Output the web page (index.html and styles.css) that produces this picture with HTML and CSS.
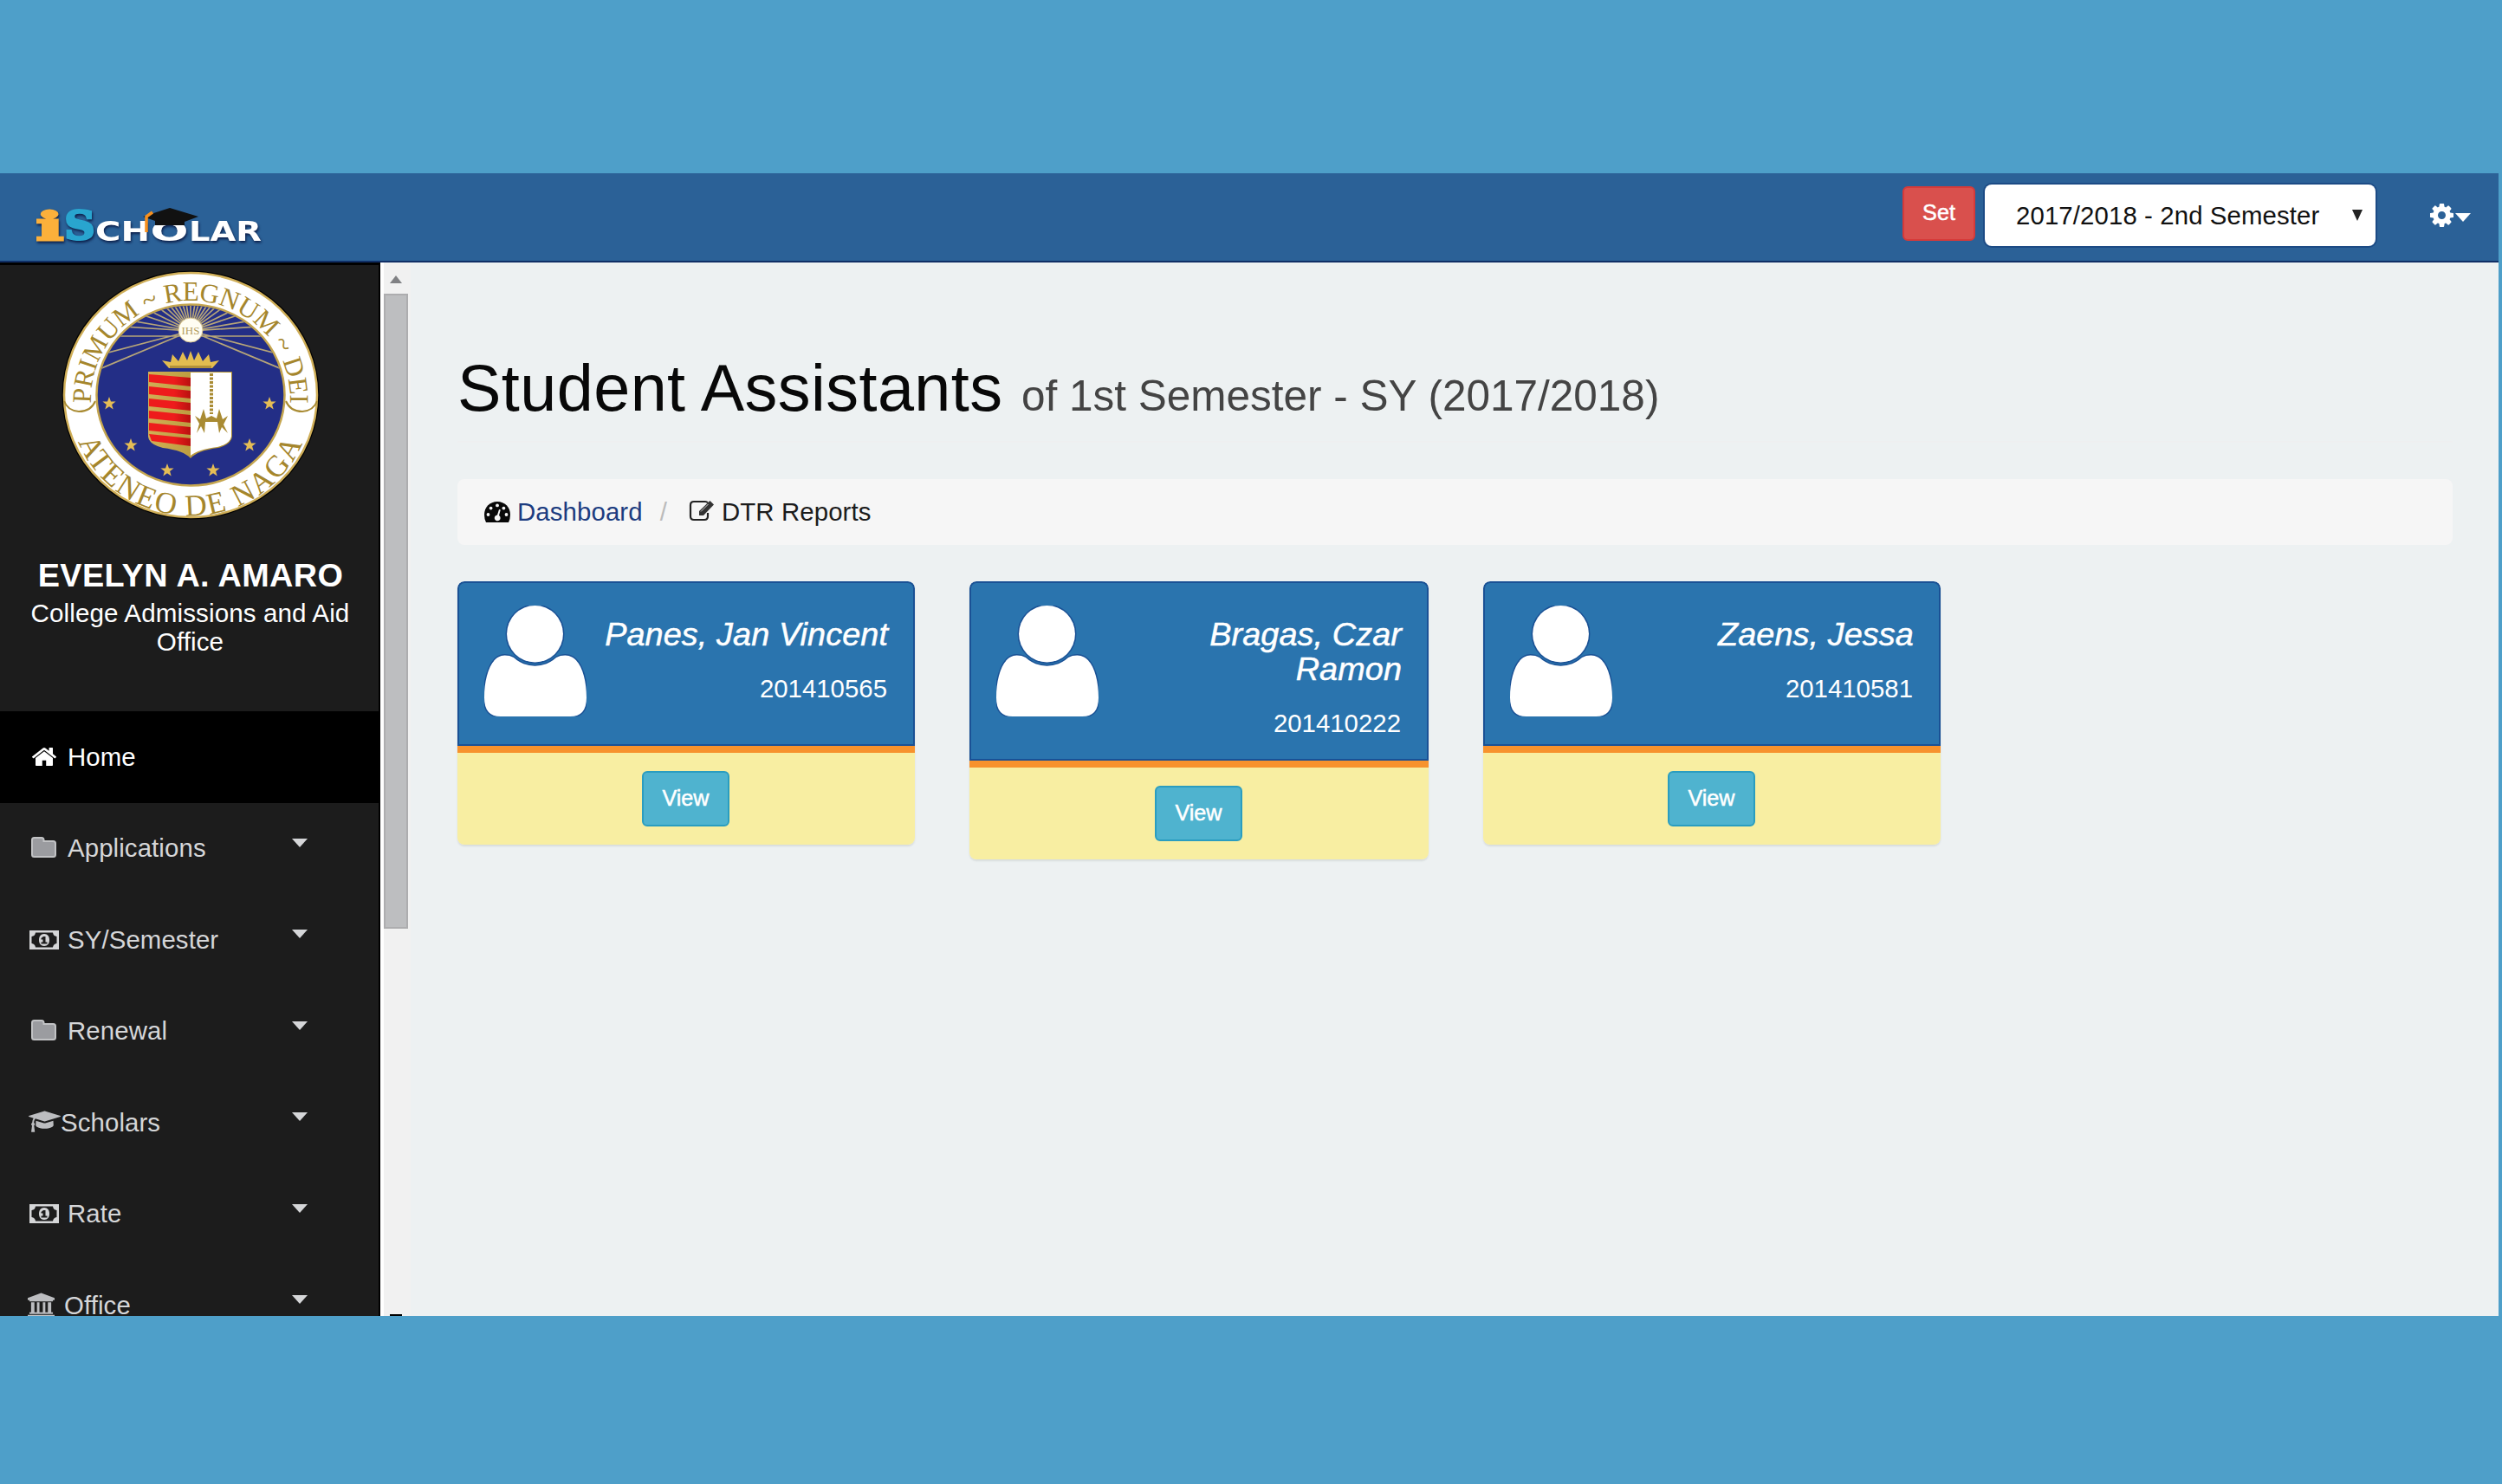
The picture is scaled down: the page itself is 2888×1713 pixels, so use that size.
FILE: index.html
```html
<!DOCTYPE html>
<html lang="en">
<head>
<meta charset="utf-8">
<title>iScholar - Student Assistants</title>
<link rel="stylesheet" href="styles.css">
</head>
<body>
<svg class="defs" aria-hidden="true">
  <symbol id="home" viewBox="90 250 1612 1290" preserveAspectRatio="none"><path d="M1472 992v480q0 26-19 45t-45 19h-384v-384h-256v384h-384q-26 0-45-19t-19-45v-480q0-1 .5-3t.5-3l575-474 575 474q1 2 1 6zm223-69l-62 74q-8 9-21 11h-3q-13 0-21-7l-692-577-692 577q-12 8-24 7-13-2-21-11l-62-74q-8-10-7-23.5t11-21.5l719-599q32-26 76-26t76 26l244 204v-195q0-14 9-23t23-9h192q14 0 23 9t9 23v408l219 182q10 8 11 21.5t-7 23.5z"/></symbol>
  <symbol id="folder" viewBox="0 0 29 24"><path d="M1 3.5Q1 1 3.5 1H12Q14.500 1 14.500 3.500V5H25.500Q28 5 28 7.500V20.500Q28 23 25.500 23H3.500Q1 23 1 20.500Z" fill="#9b9ca0" stroke="#c2c3c5" stroke-width="2"/></symbol>
  <symbol id="money" viewBox="0 0 34 22"><path fill-rule="evenodd" d="M0 0H34V22H0ZM7 2.500Q6.500 6.500 2.500 7V15Q6.500 15.500 7 19.500H27Q27.500 15.500 31.500 15V7Q27.500 6.500 27 2.500Z"/><path fill-rule="evenodd" d="M17 4C21 4 23 7 23 11S21 18 17 18 11 15 11 11 13 4 17 4ZM16 7L13.500 9V10.500H15.500V13.500H13.500V15.500H20.500V13.500H18.500V7Z"/></symbol>
  <symbol id="cap" viewBox="0 100 2304 1580" preserveAspectRatio="none"><path d="M1774 836l18 316q4 69-82 128t-235 93.500-323 34.500-323-34.500-235-93.500-82-128l18-316 574 181q22 7 48 7t48-7zm530-324q0 23-22 31l-1120 352q-4 1-10 1t-10-1l-652-206q-43 34-71 111.500t-34 178.500q63 36 63 109 0 69-58 107l58 433q2 14-8 25-9 11-24 11h-192q-15 0-24-11-10-11-8-25l58-433q-58-38-58-107 0-73 65-111 11-207 98-330l-333-104q-22-8-22-31t22-31l1120-352q4-1 10-1t10 1l1120 352q22 8 22 31z"/></symbol>
  <symbol id="bank" viewBox="0 0 32 30"><path d="M16 0L32 6V8.500H30V10H2V8.500H0V6ZM4 11H8V23H11V11H14V23H18V11H21V23H24V11H28V23H30V25H2V23H4ZM0 26H32V30H0Z"/></symbol>
  <symbol id="cog" viewBox="128 128 1536 1536"><path d="M1152 896q0-106-75-181t-181-75-181 75-75 181 75 181 181 75 181-75 75-181zm512-109v222q0 12-8 23t-20 13l-185 28q-19 54-39 91 35 50 107 138 10 12 10 25t-9 23q-27 37-99 108t-94 71q-12 0-26-9l-138-108q-44 23-91 38-16 136-29 186-7 28-36 28h-222q-14 0-24.500-8.500t-11.500-21.500l-28-184q-49-16-90-37l-141 107q-10 9-25 9-14 0-25-11-126-114-165-168-7-10-7-23 0-12 8-23 15-21 51-66.500t54-70.500q-27-50-41-99l-183-27q-13-2-21-12.500t-8-23.500v-222q0-12 8-23t19-13l186-28q14-46 39-92-40-57-107-138-10-12-10-24 0-10 9-23 26-36 98.500-107.500t94.500-71.500q13 0 26 10l138 107q44-23 91-38 16-136 29-186 7-28 36-28h222q14 0 24.500 8.500t11.500 21.500l28 184q49 16 90 37l142-107q9-9 24-9 13 0 25 10 129 119 165 170 7 8 7 22 0 12-8 23-15 21-51 66.500t-54 70.500q26 50 41 98l183 28q13 2 21 12.500t8 23.500z"/></symbol>
  <symbol id="gauge" viewBox="0 0 30 24"><path d="M15 0C23.500 0 30 6.500 30 15Q30 20 28 24H2Q0 20 0 15C0 6.500 6.500 0 15 0Z"/><g fill="#f5f5f5"><circle cx="4.500" cy="15" r="1.900"/><circle cx="7.600" cy="7.600" r="1.900"/><circle cx="15" cy="4.400" r="1.900"/><circle cx="22.400" cy="7.600" r="1.900"/><circle cx="25.500" cy="15" r="1.900"/><path d="M17 9L18.800 9.500L17 16A3.400 3.400 0 1 1 15 15.500Z"/></g></symbol>
  <symbol id="edit" viewBox="0 0 30 25"><path d="M22 3.500Q21 2 19 2H6Q2 2 2 6V19Q2 23 6 23H18Q22 23 22 19V15" fill="none" stroke="#222" stroke-width="2.200"/><path d="M24.500 1L29 5.500L17 18H12V13Z" fill="#333"/><path d="M14 13.500L22.500 5" stroke="#ccc" stroke-width="1"/></symbol>
  <symbol id="user" viewBox="0 0 120 129" preserveAspectRatio="none"><circle cx="59.500" cy="33" r="33"/><path d="M24 58Q30 58 34.500 60.500A37 37 0 0 0 84.500 60.500Q89 58 95 58C112 58 120 82 120 107Q120 129 101 129H19Q0 129 0 107C0 82 8 58 24 58Z"/></symbol>
  <symbol id="star" viewBox="-8 -8 16 16"><path d="M0-8L2-2.500H7.600L3.100 1L4.700 6.500L0 3.300L-4.700 6.500L-3.100 1L-7.600-2.500H-2Z"/></symbol>
</svg>

<div class="app">
  <header class="topbar">
    <svg class="logo" viewBox="38 232 270 54" aria-label="iScholar">
      <g class="logo-text">
        <text x="42" y="276.500" class="slab i" textLength="31" lengthAdjust="spacingAndGlyphs">i</text>
        <text x="74.500" y="276" class="slab s" textLength="35" lengthAdjust="spacingAndGlyphs">S</text>
        <text x="110" y="277.500" class="caps" textLength="63" lengthAdjust="spacingAndGlyphs">CH</text>
        <text x="173.500" y="277.500" class="caps" textLength="44" lengthAdjust="spacingAndGlyphs">O</text>
        <text x="218" y="277.500" class="caps" textLength="84" lengthAdjust="spacingAndGlyphs">LAR</text>
      </g>
      <path d="M165 250L196 240L229 250L213 256V260H179V255Z" fill="#111"/>
      <path d="M169 268V250L176 245" fill="none" stroke="#f7901e" stroke-width="3.500"/>
    </svg>
    <div class="tools">
      <button class="btn danger">Set</button>
      <div class="select"><span>2017/2018 - 2nd Semester</span><i class="arrow"></i></div>
      <div class="settings"><svg><use href="#cog"/></svg><i class="caret"></i></div>
    </div>
  </header>

  <div class="main">
    <aside class="sidebar">
      <div class="profile">
        <svg class="seal" viewBox="70 311 300 290">
          <defs>
            <path id="arc-top" d="M105 475V461A115 114 0 0 1 335 461V475"/>
            <path id="arc-bottom" d="M82 480A139.500 135 0 0 0 358 480"/>
            <clipPath id="field"><ellipse cx="220" cy="456" rx="107" ry="103"/></clipPath>
            <linearGradient id="gold"><stop offset="0" stop-color="#d1b055"/><stop offset="1" stop-color="#a98a2c"/></linearGradient>
            <linearGradient id="red"><stop offset="0.600" stop-color="#ee1c1c"/><stop offset="1" stop-color="#b8120f"/></linearGradient>
          </defs>
          <ellipse cx="220" cy="456" rx="148.500" ry="143.500" fill="#000"/>
          <ellipse cx="220" cy="456" rx="146" ry="141" fill="#fff" stroke="#cfae58" stroke-width="2.500"/>
          <ellipse cx="220" cy="456" rx="108.500" ry="104.500" fill="#232e86" stroke="#c5a650" stroke-width="2.500"/>
          <g clip-path="url(#field)" stroke="#b6a578" stroke-width="1.700">
            <path d="M220 382L110 428M220 382L330 428M220 382L110 411M220 382L330 411M220 388L110 388M220 388L330 388M220 382L110 363M220 382L330 363M220 382L124 350M220 382L316 350M220 382L145 345M220 382L295 345M220 382L162 340M220 382L278 340M220 382L174 338M220 382L266 338M220 382L184 338M220 382L256 338M220 382L192 338M220 382L248 338M220 382L200 338M220 382L240 338M220 382L207 338M220 382L233 338M220 382L213 338M220 382L227 338M220 382V338M220 382L110 375M220 382L330 375"/>
          </g>
          <circle cx="220" cy="381" r="14" fill="#fffdf2" stroke="#d7c48c"/>
          <text x="220" y="386" class="ihs" text-anchor="middle">IHS</text>
          <path d="M195 425L187 416L197 418L199 409L206 417L211 406L216 416L220 405L224 416L229 406L234 417L241 409L243 418L253 416L245 425Z" fill="#e3bd50"/>
          <path d="M196 422H244V425H196Z" fill="#b3923a"/>
          <path d="M171 429H268V504Q267 513 252 517Q228 520 220 529Q212 520 188 517Q172 513 171 504Z" fill="url(#gold)"/>
          <path d="M220 430H267V504Q266 512 251 516Q228 519 220 526Z" fill="#fff"/>
          <path d="M172 432L220 436V446L172 441ZM172 446L220 451V460L172 455ZM172 460L220 465V474L172 469ZM172 474L220 479V488L172 483ZM172 488L220 493V502L172 497ZM172 501L220 506V515L175 509Z" fill="url(#red)"/>
          <path d="M244 431V478" stroke="#a98b33" stroke-width="4" stroke-dasharray="3 1.500" fill="none"/>
          <path d="M225 480L231 484L235 472L238 483L244 480L250 483L253 472L257 484L263 480L258 490L263 500L256 493L253 500L251 487H237L236 500L232 492L227 500L230 489Z" fill="#a98b33"/>
          <g fill="#e5bd55"><use href="#star" x="118" y="458" width="16" height="16"/><use href="#star" x="303" y="458" width="16" height="16"/><use href="#star" x="143" y="506" width="16" height="16"/><use href="#star" x="280" y="506" width="16" height="16"/><use href="#star" x="185" y="535" width="16" height="16"/><use href="#star" x="238" y="535" width="16" height="16"/></g>
          <path d="M74 463Q78 474 91 475Q105 475 110 463M366 463Q362 474 349 475Q335 475 330 463" fill="none" stroke="#a98b33" stroke-width="2"/>
          <text class="motto top" text-anchor="middle"><textPath href="#arc-top" startOffset="50%">PRIMUM ~ REGNUM ~ DEI</textPath></text>
          <text class="motto bottom" text-anchor="middle"><textPath href="#arc-bottom" startOffset="50%">ATENEO DE NAGA</textPath></text>
        </svg>
        <h2>EVELYN A. AMARO</h2>
        <p>College Admissions and Aid Office</p>
      </div>
      <nav>
        <a class="item active"><svg class="i-home"><use href="#home"/></svg><span>Home</span></a>
        <a class="item"><svg class="i-folder"><use href="#folder"/></svg><span>Applications</span><i class="caret"></i></a>
        <a class="item"><svg class="i-money"><use href="#money"/></svg><span>SY/Semester</span><i class="caret"></i></a>
        <a class="item"><svg class="i-folder"><use href="#folder"/></svg><span>Renewal</span><i class="caret"></i></a>
        <a class="item"><svg class="i-cap"><use href="#cap"/></svg><span>Scholars</span><i class="caret"></i></a>
        <a class="item"><svg class="i-money"><use href="#money"/></svg><span>Rate</span><i class="caret"></i></a>
        <a class="item"><svg class="i-bank"><use href="#bank"/></svg><span>Office</span><i class="caret"></i></a>
      </nav>
    </aside>
    <div class="scrollbar"><i class="up"></i><div class="thumb"></div><i class="down"></i></div>

    <main class="content">
      <h1>Student Assistants <small>of 1st Semester - SY (2017/2018)</small></h1>
      <div class="breadcrumb">
        <svg class="i-gauge"><use href="#gauge"/></svg><a>Dashboard</a><span class="slash">/</span><svg class="i-edit"><use href="#edit"/></svg><span>DTR Reports</span>
      </div>
      <div class="cards">
        <section class="card">
          <div class="card-head"><svg class="i-user"><use href="#user"/></svg><div class="who"><h3>Panes, Jan Vincent</h3><p>201410565</p></div></div>
          <div class="card-foot"><button class="btn info">View</button></div>
        </section>
        <section class="card">
          <div class="card-head"><svg class="i-user"><use href="#user"/></svg><div class="who"><h3>Bragas, Czar Ramon</h3><p>201410222</p></div></div>
          <div class="card-foot"><button class="btn info">View</button></div>
        </section>
        <section class="card">
          <div class="card-head"><svg class="i-user"><use href="#user"/></svg><div class="who"><h3>Zaens, Jessa</h3><p>201410581</p></div></div>
          <div class="card-foot"><button class="btn info">View</button></div>
        </section>
      </div>
    </main>
  </div>
</div>
</body>
</html>
```
FILE: styles.css
```css
* { box-sizing: border-box; }
body {
  margin: 0;
  padding-top: 200px;
  height: 1713px;
  overflow: hidden;
  background: #4e9fc9;
  font: 29.4px/42px "Liberation Sans", Arial, sans-serif;
  color: #1c1c1c;
}
h1, h2, h3, p { margin: 0; font-weight: 400; }
svg { display: block; flex: none; fill: currentColor; }
.defs { width: 0; height: 0; float: left; }
.app { width: 2884px; height: 1319px; overflow: hidden; background: #edf1f2; }

.topbar {
  height: 103px;
  display: flex;
  justify-content: space-between;
  background: #2b6197;
  border-bottom: 2px solid #102f66;
}
.logo { width: 270px; height: 54px; margin: 32px 0 0 38px; overflow: visible; }
.logo-text { filter: drop-shadow(1px 2px 1.5px #0b1d48); }
.slab { font: bold 44px "DejaVu Serif", serif; }
.slab.i { fill: #fbb03b; stroke: #fbb03b; stroke-width: 3px; }
.slab.s { fill: #29a5cf; stroke: #29a5cf; stroke-width: 3px; }
.caps { font: bold 32px "DejaVu Sans", sans-serif; fill: #fff; }
.tools { display: flex; padding: 13px 32px 0 0; }
.btn {
  font: 25.2px/37px "Liberation Sans", Arial, sans-serif;
  color: #fff;
  border: 2px solid;
  border-radius: 6px;
  padding: 0;
  -webkit-text-stroke: 0.5px #fff;
}
.danger { width: 84px; height: 63px; margin-top: 2px; padding-bottom: 2px; background: #d9504d; border-color: #d63a39; }
.select {
  width: 451px;
  height: 71px;
  margin-left: 11px;
  padding: 0 15px 0 36px;
  display: flex;
  align-items: center;
  justify-content: space-between;
  background: #fff;
  color: #111;
  letter-spacing: 0.1px;
  border-radius: 8px;
  box-shadow: 0 0 0 2px #1c4b85;
}
.select .arrow { border: solid transparent; border-width: 13px 6px 0; border-top-color: #222; }
.settings { display: flex; margin: 22px 0 0 63px; color: #fff; }
.settings svg { width: 27px; height: 27px; }
.settings .caret { margin: 11px 0 0 2px; }
.caret { border: solid transparent; border-width: 10px 9px 0; border-top-color: currentColor; height: 0; }

.main { display: flex; height: 1216px; }
.sidebar {
  width: 439px;
  background: #1c1c1c;
  border-right: 2px solid #000;
  border-top: 3px solid #000;
  overflow: hidden;
  flex: none;
}
.profile { height: 515px; padding-top: 5px; text-align: center; color: #fff; }
.seal { width: 300px; height: 290px; margin-left: 70px; overflow: visible; }
.motto { font-family: "Liberation Serif", serif; fill: #a5862c; }
.motto.top { font-size: 31px; letter-spacing: -0.4px; }
.motto.bottom { font-size: 35px; letter-spacing: 2px; }
.ihs { font: 13px "Liberation Serif", serif; fill: #b5a064; }
.profile h2 { font-weight: 700; font-size: 37.8px; letter-spacing: 0.4px; line-height: 40px; margin: 43px 0 0 3px; }
.profile p { font-size: 29.6px; letter-spacing: 0.1px; line-height: 32.5px; margin: 8px 0 0 2px; padding: 0 20px; }
.item {
  height: 105.5px;
  display: flex;
  align-items: center;
  color: #d5d6d8;
}
.item.active { background: #000; color: #fff; }
.item span { flex: 1; letter-spacing: 0.1px; }
.item .caret { margin: -13px 82px 0 0; }
.i-home { width: 28px; height: 21px; margin: 0 13px 0 37px; }
.i-folder { width: 29px; height: 24px; margin: -2px 13px 0 36px; }
.i-money { width: 34px; height: 22px; margin: 0 10px 0 34px; }
.i-cap { width: 37px; height: 25px; margin: -2px 0 0 33px; }
.i-cap, .i-bank { color: #bcbdc0; }
.i-bank { width: 31px; height: 30px; margin: 0 11px 0 32px; }

.scrollbar {
  width: 35px;
  flex: none;
  background: #f1f1f1;
  border-left: 4px solid #fff;
  display: flex;
  flex-direction: column;
}
.scrollbar i { border: solid transparent; margin-left: 7px; width: 14px; flex: none; }
.up { margin-top: 15px; border-width: 0 7px 9px !important; border-bottom-color: #808184 !important; }
.thumb { width: 28px; height: 733px; margin: 12px 0 445px; background: #bdbec0; border: 2px solid #adadaf; flex: none; }
.down { border-width: 2px 0 0 !important; border-top-color: #000 !important; }

.content { flex: 1; padding: 104px 53px 0 54px; }
h1 {
  height: 104px;
  font-size: 75.6px;
  line-height: 83px;
  letter-spacing: 0.42px;
  margin-bottom: 42px;
  border-bottom: 2px solid #eeeff0;
  color: #080808;
  white-space: nowrap;
}
h1 small { font-size: 49.5px; letter-spacing: 0; color: #444; }
.breadcrumb {
  height: 76px;
  display: flex;
  align-items: center;
  padding-left: 31px;
  letter-spacing: 0.1px;
  background: #f6f6f6;
  border-radius: 8px;
  margin-bottom: 42px;
}
.i-gauge { width: 30px; height: 24px; margin-right: 8px; color: #080808; }
.breadcrumb a { color: #1c3c80; }
.slash { color: #bbb; margin: 0 25px 0 20px; }
.i-edit { width: 30px; height: 25px; margin: -3px 8px 0 0; }
.cards { display: grid; grid-template-columns: 528px 530px 528px; gap: 63px; align-items: start; }
.card { border-radius: 8px; overflow: hidden; box-shadow: 0 2px 2px #d9dddd; }
.card-head {
  min-height: 190px;
  display: flex;
  padding: 0 29px 20px 28px;
  background: #2a74ae;
  color: #fff;
  border: 2px solid #1a5195;
  border-radius: 8px 8px 0 0;
}
.i-user { width: 118px; height: 128px; margin: 26px 0 0 1px; overflow: visible; stroke: #1a5195; stroke-width: 3px; paint-order: stroke; }
.who { flex: 1; padding: 39px 0 0 10px; text-align: right; }
.who h3 { font-style: italic; font-size: 37.8px; letter-spacing: 0.1px; line-height: 40px; margin-bottom: 22px; -webkit-text-stroke: 0.5px #fff; }
.who p { padding-right: 1px; }
.card-foot {
  height: 114px;
  border-top: 8px solid #f7922d;
  background: #f8eea2;
  display: grid;
  place-items: center;
}
.info { width: 101px; height: 64px; margin-right: 1px; background: #4fb3cf; border-color: #2a9dc0; padding-bottom: 2px; }
```
